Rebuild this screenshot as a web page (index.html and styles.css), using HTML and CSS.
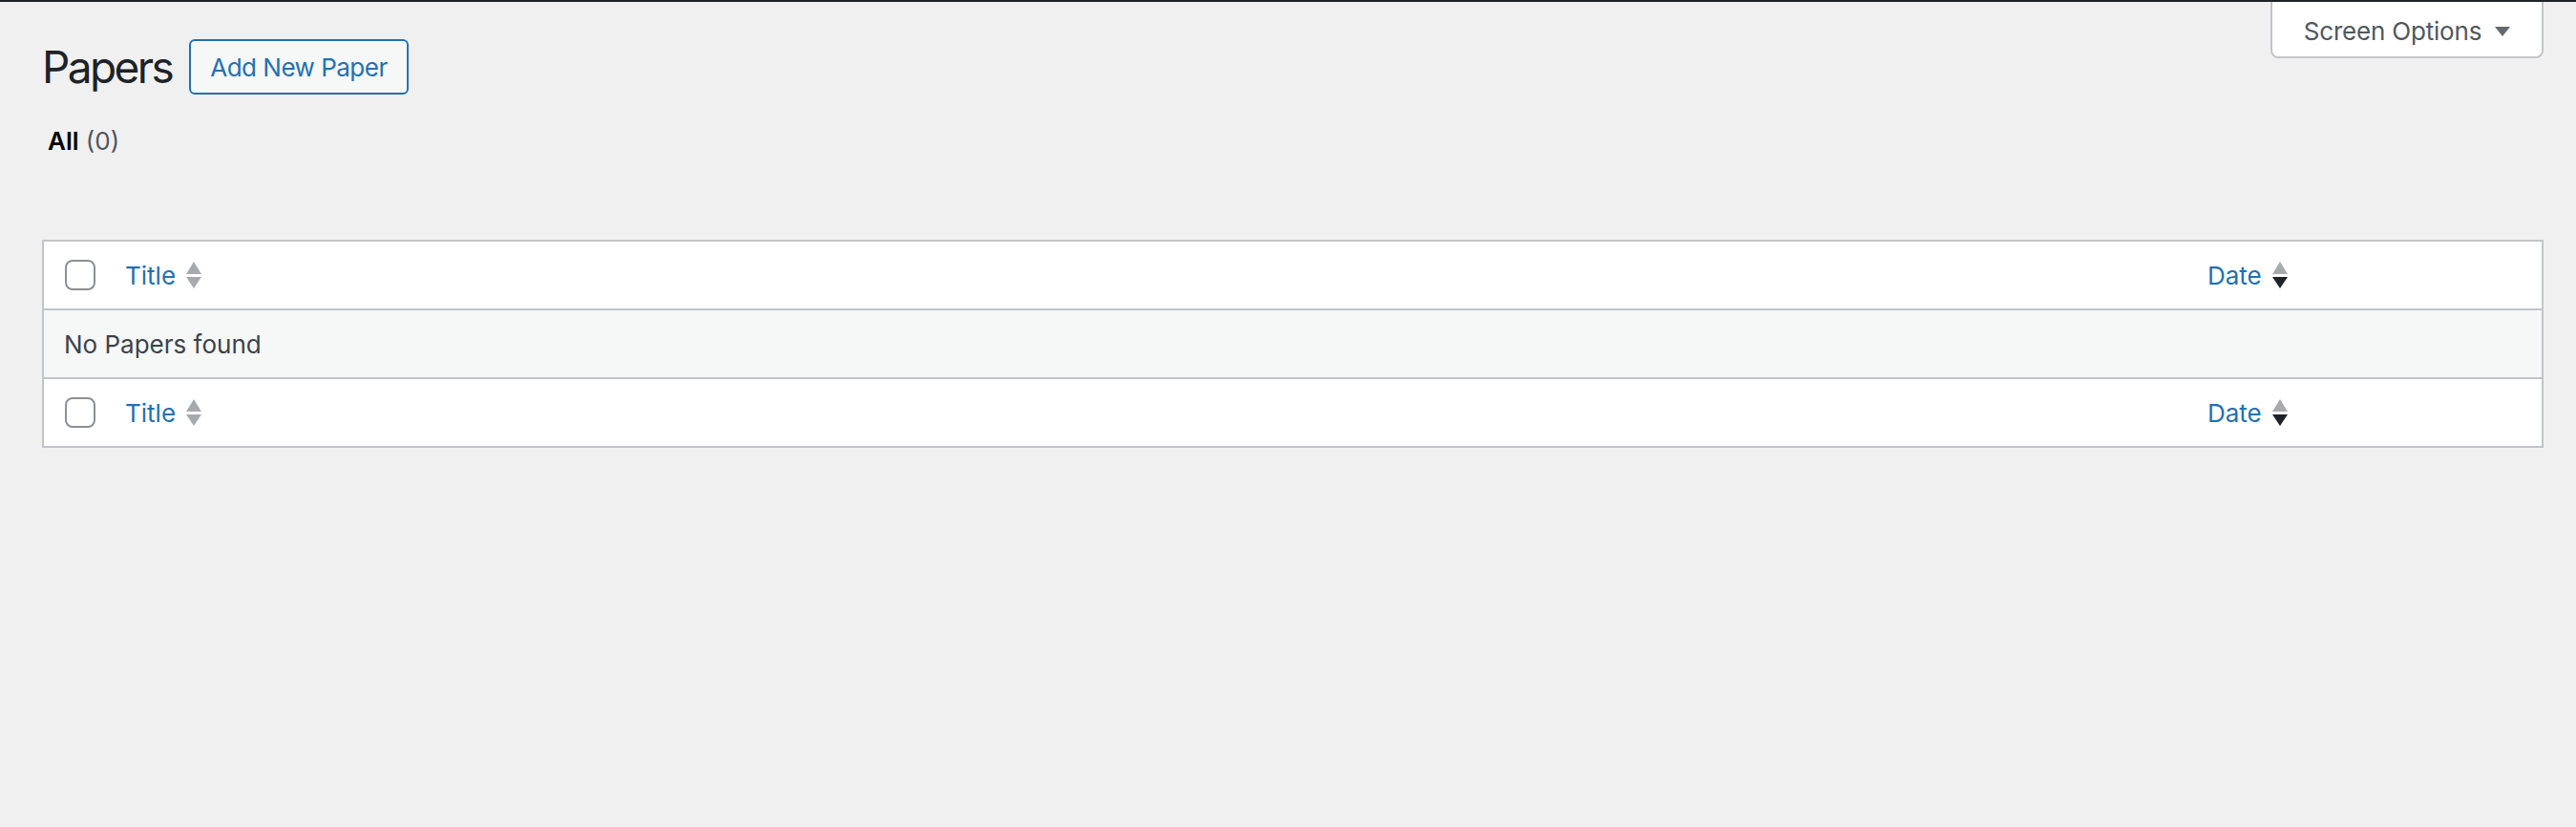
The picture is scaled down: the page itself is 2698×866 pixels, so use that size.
FILE: index.html
```html
<!DOCTYPE html>
<html lang="en">
<head>
<meta charset="utf-8">
<title>Papers</title>
<link rel="stylesheet" href="styles.css">
</head>
<body>
<div class="topbar"></div>
<div class="wrap">
  <button class="screen-options" type="button">Screen Options <span class="tri"></span></button>
  <div class="title-row">
    <h1 class="page-title">Papers</h1>
    <a class="add-new" href="#">Add New Paper</a>
  </div>
  <div class="subsubsub"><span class="current">All</span> <span class="count">(0)</span></div>
  <div class="list-table">
    <div class="row head">
      <div class="cell cb"><span class="checkbox"></span></div>
      <div class="cell col-title"><a href="#" class="sort-link">Title <svg class="sort" viewBox="0 0 16 30" width="16" height="30"><polygon points="0,14 8,1 16,14" fill="#a7aaad"/><polygon points="0,17 16,17 8,29" fill="#a7aaad"/></svg></a></div>
      <div class="cell col-date"><a href="#" class="sort-link">Date <svg class="sort" viewBox="0 0 16 30" width="16" height="30"><polygon points="0,14 8,1 16,14" fill="#a7aaad"/><polygon points="0,17 16,17 8,29" fill="#1d2327"/></svg></a></div>
    </div>
    <div class="row empty">
      <div class="cell no-items">No Papers found</div>
    </div>
    <div class="row foot">
      <div class="cell cb"><span class="checkbox"></span></div>
      <div class="cell col-title"><a href="#" class="sort-link">Title <svg class="sort" viewBox="0 0 16 30" width="16" height="30"><polygon points="0,14 8,1 16,14" fill="#a7aaad"/><polygon points="0,17 16,17 8,29" fill="#a7aaad"/></svg></a></div>
      <div class="cell col-date"><a href="#" class="sort-link">Date <svg class="sort" viewBox="0 0 16 30" width="16" height="30"><polygon points="0,14 8,1 16,14" fill="#a7aaad"/><polygon points="0,17 16,17 8,29" fill="#1d2327"/></svg></a></div>
    </div>
  </div>
</div>
</body>
</html>
```
FILE: styles.css
```css
html, body {
  margin: 0;
  padding: 0;
  background: #f0f0f1;
  font-family: Inter, "Open Sans", "Liberation Sans", sans-serif;
  font-size: 26px;
  color: #3c434a;
}
.topbar {
  height: 2px;
  background: #1d2327;
}
.wrap {
  padding: 0 34px 0 44px;
}
.screen-options {
  float: right;
  width: 286px;
  height: 59px;
  margin: 0;
  padding: 4px 0 0 0;
  background: #fff;
  border: 2px solid #c3c4c7;
  border-top: none;
  border-radius: 0 0 8px 8px;
  font-family: inherit;
  font-size: 26px;
  letter-spacing: -0.2px;
  color: #50575e;
  display: flex;
  align-items: center;
  justify-content: center;
  gap: 14px;
}
.tri {
  width: 0;
  height: 0;
  border-left: 8px solid transparent;
  border-right: 8px solid transparent;
  border-top: 10px solid #646970;
}
.title-row {
  display: flex;
  align-items: center;
  padding-top: 38px;
  height: 60px;
}
.page-title {
  margin: 0;
  font-size: 46px;
  font-weight: 400;
  line-height: 60px;
  color: #1d2327;
  letter-spacing: -2.6px;
}
.add-new {
  margin-left: 18px;
  height: 54px;
  padding: 0 20px;
  border: 2px solid #2271b1;
  border-radius: 6px;
  background: #f6f7f7;
  color: #2271b1;
  text-decoration: none;
  display: flex;
  align-items: center;
  font-size: 26px;
  letter-spacing: -0.5px;
}
.subsubsub {
  margin-top: 30px;
  height: 36px;
  line-height: 36px;
  padding-left: 6px;
}
.subsubsub .current {
  font-weight: 600;
  color: #000;
}
.subsubsub .count {
  color: #50575e;
}
.list-table {
  margin-top: 85px;
  background: #fff;
  border: 2px solid #c3c4c7;
}
.row {
  display: flex;
  align-items: center;
  height: 70px;
}
.row.head {
  border-bottom: 2px solid #c3c4c7;
}
.row.foot {
  border-top: 2px solid #c3c4c7;
}
.row.empty {
  background: #f6f7f7;
}
.cell {
  display: flex;
  align-items: center;
}
.cb {
  width: 63px;
  padding-left: 22px;
}
.checkbox {
  display: block;
  width: 28px;
  height: 28px;
  border: 2px solid #8c8f94;
  border-radius: 8px;
  background: #fff;
}
.col-title {
  flex: 1;
}
.col-date {
  width: 350px;
}
.sort-link {
  color: #2271b1;
  text-decoration: none;
  display: flex;
  align-items: center;
  gap: 11px;
}
.no-items {
  padding-left: 21px;
  color: #3c434a;
}
```
